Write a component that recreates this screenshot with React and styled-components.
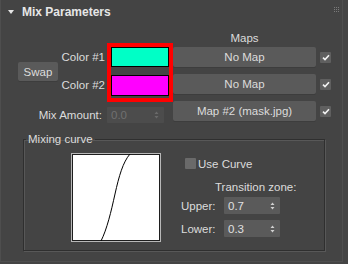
import React from 'react';
import styled, { createGlobalStyle } from 'styled-components';

const GlobalStyle = createGlobalStyle`
  html, body {
    margin: 0;
    padding: 0;
    background: #444444;
  }
  body {
    font-family: "Liberation Sans", Arial, sans-serif;
    font-size: 11px;
    color: #dcdcdc;
  }
`;

const Rollout = styled.div`
  box-sizing: border-box;
  width: 343px;
  height: 262px;
  border: 1px solid #4e4e4e;
  border-top: none;
  background: #444444;
`;

const Header = styled.div`
  display: flex;
  align-items: center;
  height: 24px;
  padding: 0 3px 0 7px;
`;

const Title = styled.span`
  flex: 1;
  margin-left: 8px;
  font-size: 12px;
  font-weight: bold;
  color: #e6e6e6;
`;

const Grip = styled.div`
  align-self: flex-start;
  margin-top: 7px;
  display: grid;
  grid-template-columns: repeat(3, 1px);
  gap: 1px;
  span {
    width: 1px;
    height: 1px;
    background: #7a7a7a;
  }
`;

const Top = styled.div`
  display: flex;
  margin-top: 6px;
`;

const LeftPart = styled.div`
  width: 172px;
  display: flex;
  flex-direction: column;
  padding-top: 13px;
`;

const ColorBlock = styled.div`
  display: flex;
  align-items: flex-start;
`;

const Button = styled.button`
  box-sizing: border-box;
  border: none;
  border-radius: 2px;
  background: #5a5a5a;
  box-shadow: 0 1px 0 #3d3d3d;
  color: #dcdcdc;
  font: inherit;
  font-size: 11.5px;
  padding: 0;
  width: ${p => p.$w}px;
  height: ${p => p.$h || 20}px;
  flex: none;
`;

const SwapButton = styled(Button)`
  align-self: center;
  margin-left: 17px;
  margin-top: -2px;
`;

const ColorLabels = styled.div`
  width: 48px;
  padding-top: 4px;
  display: flex;
  flex-direction: column;
  gap: 8px;
  align-items: flex-end;
  margin-right: 2px;
`;

const Label = styled.div`
  height: ${p => p.$h || 20}px;
  line-height: ${p => p.$h || 20}px;
  font-size: 11.5px;
  white-space: nowrap;
`;

const Highlight = styled.div`
  border: 4px solid #ff0000;
  padding-bottom: 2px;
  display: flex;
  flex-direction: column;
  gap: 8px;
`;

const Swatch = styled.div`
  box-sizing: border-box;
  width: 58px;
  height: ${p => p.$h}px;
  border: 1px solid #000;
  background: ${p => p.$color};
`;

const MixRow = styled.div`
  display: flex;
  align-items: center;
  margin-top: 5px;
  gap: 5px;
`;

const MixLabel = styled.div`
  width: 101px;
  text-align: right;
  font-size: 11.5px;
`;

const Spinner = styled.div`
  box-sizing: border-box;
  display: flex;
  align-items: center;
  justify-content: space-between;
  width: ${p => p.$w}px;
  height: ${p => p.$h}px;
  padding: 0 5px 0 4px;
  background: ${p => (p.$disabled ? '#4c4c4c' : '#5a5a5a')};
  color: ${p => (p.$disabled ? '#707070' : '#e0e0e0')};
  font-size: 11.5px;
  border-radius: 1px;
`;

const RightPart = styled.div`
  display: flex;
  flex-direction: column;
  gap: 7px;
`;

const MapsLabel = styled.div`
  width: 143px;
  height: 17px;
  line-height: 17px;
  margin-bottom: -7px;
  text-align: center;
  font-size: 11.5px;
`;

const MapRow = styled.div`
  display: flex;
  align-items: center;
  gap: 4px;
`;

const Check = styled.div`
  box-sizing: border-box;
  display: flex;
  align-items: center;
  justify-content: center;
  width: 11px;
  height: 11px;
  border-radius: 1px;
  background: ${p => (p.$on ? '#5f5f5f' : '#6a6a6a')};
  flex: none;
`;

const Group = styled.fieldset`
  box-sizing: border-box;
  width: 302px;
  height: 118px;
  margin: 10px 0 0 22px;
  padding: 7px 0 0 2px;
  border: 1px solid #2f2f2f;
  box-shadow: inset 1px 1px 0 #585858, 1px 1px 0 #585858;
  legend {
    padding: 0 2px;
    line-height: 13px;
    font-size: 11.5px;
    color: #dcdcdc;
  }
`;

const GroupBody = styled.div`
  display: flex;
  align-items: flex-start;
`;

const CurveBox = styled.div`
  box-sizing: border-box;
  width: 90px;
  height: 89px;
  margin-left: 45px;
  border: 1px solid #b8b8b8;
  background: #fff;
  box-shadow: inset 0 0 0 1px #1e1e1e;
  svg {
    display: block;
  }
`;

const Controls = styled.div`
  margin-left: 20px;
  margin-top: 5px;
  display: flex;
  flex-direction: column;
`;

const CheckRow = styled.div`
  display: flex;
  align-items: center;
  gap: 2px;
  padding-left: 4px;
  height: 11px;
  font-size: 11.5px;
`;

const ZoneLabel = styled.div`
  margin: 12px 0 3px 34px;
  line-height: 13px;
  font-size: 11.5px;
`;

const ValueRow = styled.div`
  display: flex;
  align-items: center;
  margin-bottom: ${p => p.$mb || 0}px;
`;

const ValueLabel = styled.div`
  width: 43px;
  font-size: 11.5px;
`;

const Triangle = () => (
  <svg width="6" height="4" viewBox="0 0 6 4">
    <path d="M0 0 H6 L3 4 Z" fill="#e6e6e6" />
  </svg>
);

const Tick = () => (
  <svg width="8" height="7" viewBox="0 0 8 7">
    <path d="M1 3.6 L3 5.6 L7 1.2" stroke="#f2f2f2" strokeWidth="1.6" fill="none" />
  </svg>
);

const Arrows = ({ color }) => (
  <svg width="5" height="8" viewBox="0 0 5 8">
    <path d="M2.5 0.5 L4.5 3 H0.5 Z M2.5 7.5 L4.5 5 H0.5 Z" fill={color} />
  </svg>
);

const maps = ['No Map', 'No Map', 'Map #2 (mask.jpg)'];

export default function App() {
  return (
    <>
      <GlobalStyle />
      <Rollout>
        <Header>
          <Triangle />
          <Title>Mix Parameters</Title>
          <Grip>
            {Array.from({ length: 9 }).map((_, i) => <span key={i} />)}
          </Grip>
        </Header>

        <Top>
          <LeftPart>
            <ColorBlock>
              <SwapButton $w={40} $h={19}>Swap</SwapButton>
              <ColorLabels>
                <Label $h={20}>Color #1</Label>
                <Label $h={21}>Color #2</Label>
              </ColorLabels>
              <Highlight>
                <Swatch $h={20} $color="#00ffc6" />
                <Swatch $h={21} $color="#ff00ff" />
              </Highlight>
            </ColorBlock>
            <MixRow>
              <MixLabel>Mix Amount:</MixLabel>
              <Spinner $w={57} $h={16} $disabled>
                <span>0.0</span>
                <Arrows color="#6a6a6a" />
              </Spinner>
            </MixRow>
          </LeftPart>

          <RightPart>
            <MapsLabel>Maps</MapsLabel>
            {maps.map((m, i) => (
              <MapRow key={i}>
                <Button $w={143}>{m}</Button>
                <Check $on><Tick /></Check>
              </MapRow>
            ))}
          </RightPart>
        </Top>

        <Group>
          <legend>Mixing curve</legend>
          <GroupBody>
            <CurveBox>
              <svg width="88" height="87" viewBox="0 0 88 87">
                <path d="M29 87 C35 75, 39 58, 43 40 S51 8, 58 0" stroke="#000" strokeWidth="1" fill="none" />
              </svg>
            </CurveBox>
            <Controls>
              <CheckRow>
                <Check />
                <span>Use Curve</span>
              </CheckRow>
              <ZoneLabel>Transition zone:</ZoneLabel>
              <ValueRow $mb={6}>
                <ValueLabel>Upper:</ValueLabel>
                <Spinner $w={56} $h={17}>
                  <span>0.7</span>
                  <Arrows color="#d0d0d0" />
                </Spinner>
              </ValueRow>
              <ValueRow>
                <ValueLabel>Lower:</ValueLabel>
                <Spinner $w={56} $h={17}>
                  <span>0.3</span>
                  <Arrows color="#d0d0d0" />
                </Spinner>
              </ValueRow>
            </Controls>
          </GroupBody>
        </Group>
      </Rollout>
    </>
  );
}
